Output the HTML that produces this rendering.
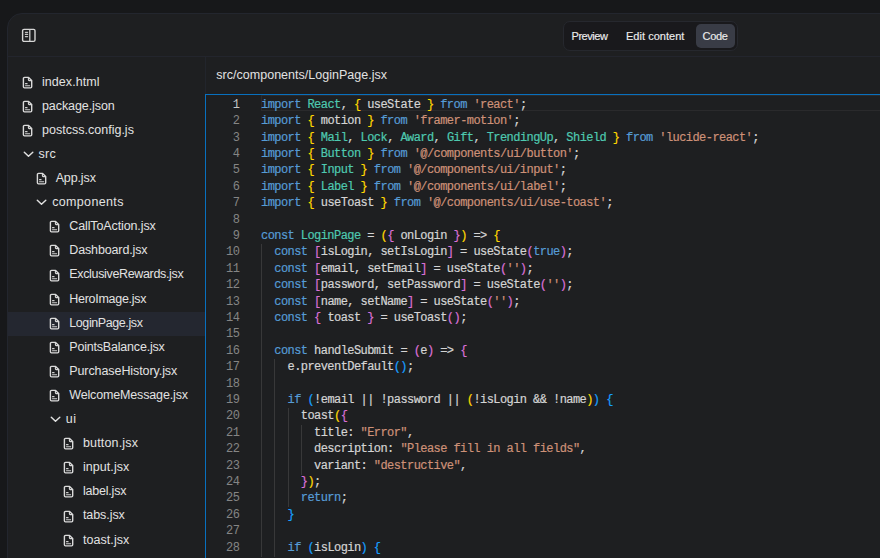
<!DOCTYPE html>
<html><head><meta charset="utf-8"><style>
html,body{margin:0;padding:0;}
body{width:880px;height:558px;overflow:hidden;background:#17181a;position:relative;font-family:"Liberation Sans",sans-serif;}
.panel{position:absolute;left:7px;top:13px;width:900px;height:600px;background:#1e1f21;border:1px solid #23262e;border-radius:15px 0 0 0;box-sizing:border-box;}
.hdr{position:absolute;left:7px;top:56px;width:880px;height:1px;background:#23252d;}
.side{position:absolute;left:205px;top:57px;width:1px;height:520px;background:#22252c;}
.tabs{position:absolute;left:563px;top:21px;width:175px;height:30px;box-sizing:border-box;border:1px solid #26282e;border-radius:7px;background:#19191c;}
.tab{position:absolute;top:24px;height:24px;line-height:24px;font-size:11px;color:#ececec;-webkit-text-stroke:0.15px #ececec;}
.tab.act{background:#393c46;border-radius:5px;}
.ic{position:absolute;line-height:0;}
.tn{position:absolute;font-size:12.5px;line-height:16px;color:#e2e2e2;white-space:pre;letter-spacing:-0.1px;}
.sel{position:absolute;left:8px;top:0;width:197px;height:24px;background:#242730;}
.fh{position:absolute;left:216.3px;top:67.4px;font-size:12.5px;line-height:16px;color:#e2e2e2;letter-spacing:0.02px;}
.ed{position:absolute;left:205px;top:94px;width:700px;height:500px;border:1px solid #0870bf;box-sizing:border-box;background:#1e1f21;}
.cur{position:absolute;left:261px;top:95px;width:640px;height:16px;box-sizing:border-box;border:1px solid #2a2a2c;border-right:none;}
.ln{position:absolute;left:261.0px;font-family:"Liberation Mono",monospace;font-size:12px;letter-spacing:-0.565px;line-height:16.4px;height:16.4px;white-space:pre;color:#d4d4d4;-webkit-text-stroke:0.2px;}
.num{position:absolute;left:205px;width:34.3px;text-align:right;font-family:"Liberation Mono",monospace;font-size:12px;letter-spacing:-0.565px;-webkit-text-stroke:0px;line-height:16.4px;white-space:pre;}
.guide{position:absolute;width:1px;height:17px;background:#383839;}
</style></head><body>
<div class="panel"></div>
<div class="hdr"></div>
<div class="ic" style="left:21px;top:28px"><svg width="16" height="16" viewBox="0 0 16 16"><rect x="1.6" y="1.4" width="12.4" height="12.0" rx="1.4" fill="none" stroke="#d6d6d6" stroke-width="1.4"/><path d="M8.8 1.6v11.6" stroke="#cfcfcf" stroke-width="1.3"/><path d="M4.4 4.3h2.2M4.4 6.4h2.2M4.4 8.6h2.2" stroke="#c4c4c4" stroke-width="1.2" stroke-linecap="round"/></svg></div>
<div class="tabs"></div>
<div class="tab act" style="left:696px;width:39px;"></div>
<div class="tab" style="left:571.5px;letter-spacing:-0.45px">Preview</div>
<div class="tab" style="left:626px;letter-spacing:0.03px">Edit content</div>
<div class="tab" style="left:702.6px;letter-spacing:-0.35px">Code</div>
<div class="side"></div>
<div class="ic" style="left:22.20px;top:75.75px"><svg width="12" height="14" viewBox="0 0 12 14"><path d="M6.6 1.4H2.5a1.1 1.1 0 0 0-1.1 1.1v8.3a1.1 1.1 0 0 0 1.1 1.1h6.1a1.1 1.1 0 0 0 1.1-1.1V4.5z" fill="none" stroke="#dadada" stroke-width="1.4" stroke-linejoin="round"/><path d="M6.4 1.6v2.2a0.8 0.8 0 0 0 0.8 0.8h2.3" fill="none" stroke="#dadada" stroke-width="1.1"/><path d="M3.1 7.6h2.4M3.1 9.7h5" stroke="#d0d0d0" stroke-width="1.1"/></svg></div><div class="tn" style="left:42.00px;top:73.67px;letter-spacing:0.056px">index.html</div><div class="ic" style="left:22.20px;top:99.85px"><svg width="12" height="14" viewBox="0 0 12 14"><path d="M6.6 1.4H2.5a1.1 1.1 0 0 0-1.1 1.1v8.3a1.1 1.1 0 0 0 1.1 1.1h6.1a1.1 1.1 0 0 0 1.1-1.1V4.5z" fill="none" stroke="#dadada" stroke-width="1.4" stroke-linejoin="round"/><path d="M6.4 1.6v2.2a0.8 0.8 0 0 0 0.8 0.8h2.3" fill="none" stroke="#dadada" stroke-width="1.1"/><path d="M3.1 7.6h2.4M3.1 9.7h5" stroke="#d0d0d0" stroke-width="1.1"/></svg></div><div class="tn" style="left:42.00px;top:97.77px;letter-spacing:-0.082px">package.json</div><div class="ic" style="left:22.20px;top:123.95px"><svg width="12" height="14" viewBox="0 0 12 14"><path d="M6.6 1.4H2.5a1.1 1.1 0 0 0-1.1 1.1v8.3a1.1 1.1 0 0 0 1.1 1.1h6.1a1.1 1.1 0 0 0 1.1-1.1V4.5z" fill="none" stroke="#dadada" stroke-width="1.4" stroke-linejoin="round"/><path d="M6.4 1.6v2.2a0.8 0.8 0 0 0 0.8 0.8h2.3" fill="none" stroke="#dadada" stroke-width="1.1"/><path d="M3.1 7.6h2.4M3.1 9.7h5" stroke="#d0d0d0" stroke-width="1.1"/></svg></div><div class="tn" style="left:42.00px;top:121.87px;letter-spacing:0.013px">postcss.config.js</div><div class="ic" style="left:22.50px;top:151.00px"><svg width="11" height="7" viewBox="0 0 11 7"><path d="M1.3 1.3L5.5 5.3L9.8 1.3" fill="none" stroke="#e0e0e0" stroke-width="1.45" stroke-linecap="round" stroke-linejoin="round"/></svg></div><div class="tn" style="left:38.50px;top:145.97px;letter-spacing:0.250px">src</div><div class="ic" style="left:35.83px;top:172.15px"><svg width="12" height="14" viewBox="0 0 12 14"><path d="M6.6 1.4H2.5a1.1 1.1 0 0 0-1.1 1.1v8.3a1.1 1.1 0 0 0 1.1 1.1h6.1a1.1 1.1 0 0 0 1.1-1.1V4.5z" fill="none" stroke="#dadada" stroke-width="1.4" stroke-linejoin="round"/><path d="M6.4 1.6v2.2a0.8 0.8 0 0 0 0.8 0.8h2.3" fill="none" stroke="#dadada" stroke-width="1.1"/><path d="M3.1 7.6h2.4M3.1 9.7h5" stroke="#d0d0d0" stroke-width="1.1"/></svg></div><div class="tn" style="left:55.63px;top:170.07px;letter-spacing:-0.117px">App.jsx</div><div class="ic" style="left:36.13px;top:199.20px"><svg width="11" height="7" viewBox="0 0 11 7"><path d="M1.3 1.3L5.5 5.3L9.8 1.3" fill="none" stroke="#e0e0e0" stroke-width="1.45" stroke-linecap="round" stroke-linejoin="round"/></svg></div><div class="tn" style="left:52.13px;top:194.17px;letter-spacing:0.356px">components</div><div class="ic" style="left:49.46px;top:220.35px"><svg width="12" height="14" viewBox="0 0 12 14"><path d="M6.6 1.4H2.5a1.1 1.1 0 0 0-1.1 1.1v8.3a1.1 1.1 0 0 0 1.1 1.1h6.1a1.1 1.1 0 0 0 1.1-1.1V4.5z" fill="none" stroke="#dadada" stroke-width="1.4" stroke-linejoin="round"/><path d="M6.4 1.6v2.2a0.8 0.8 0 0 0 0.8 0.8h2.3" fill="none" stroke="#dadada" stroke-width="1.1"/><path d="M3.1 7.6h2.4M3.1 9.7h5" stroke="#d0d0d0" stroke-width="1.1"/></svg></div><div class="tn" style="left:69.26px;top:218.27px;letter-spacing:-0.113px">CallToAction.jsx</div><div class="ic" style="left:49.46px;top:244.45px"><svg width="12" height="14" viewBox="0 0 12 14"><path d="M6.6 1.4H2.5a1.1 1.1 0 0 0-1.1 1.1v8.3a1.1 1.1 0 0 0 1.1 1.1h6.1a1.1 1.1 0 0 0 1.1-1.1V4.5z" fill="none" stroke="#dadada" stroke-width="1.4" stroke-linejoin="round"/><path d="M6.4 1.6v2.2a0.8 0.8 0 0 0 0.8 0.8h2.3" fill="none" stroke="#dadada" stroke-width="1.1"/><path d="M3.1 7.6h2.4M3.1 9.7h5" stroke="#d0d0d0" stroke-width="1.1"/></svg></div><div class="tn" style="left:69.26px;top:242.37px;letter-spacing:-0.133px">Dashboard.jsx</div><div class="ic" style="left:49.46px;top:268.55px"><svg width="12" height="14" viewBox="0 0 12 14"><path d="M6.6 1.4H2.5a1.1 1.1 0 0 0-1.1 1.1v8.3a1.1 1.1 0 0 0 1.1 1.1h6.1a1.1 1.1 0 0 0 1.1-1.1V4.5z" fill="none" stroke="#dadada" stroke-width="1.4" stroke-linejoin="round"/><path d="M6.4 1.6v2.2a0.8 0.8 0 0 0 0.8 0.8h2.3" fill="none" stroke="#dadada" stroke-width="1.1"/><path d="M3.1 7.6h2.4M3.1 9.7h5" stroke="#d0d0d0" stroke-width="1.1"/></svg></div><div class="tn" style="left:69.26px;top:266.47px;letter-spacing:-0.337px">ExclusiveRewards.jsx</div><div class="ic" style="left:49.46px;top:292.65px"><svg width="12" height="14" viewBox="0 0 12 14"><path d="M6.6 1.4H2.5a1.1 1.1 0 0 0-1.1 1.1v8.3a1.1 1.1 0 0 0 1.1 1.1h6.1a1.1 1.1 0 0 0 1.1-1.1V4.5z" fill="none" stroke="#dadada" stroke-width="1.4" stroke-linejoin="round"/><path d="M6.4 1.6v2.2a0.8 0.8 0 0 0 0.8 0.8h2.3" fill="none" stroke="#dadada" stroke-width="1.1"/><path d="M3.1 7.6h2.4M3.1 9.7h5" stroke="#d0d0d0" stroke-width="1.1"/></svg></div><div class="tn" style="left:69.26px;top:290.57px;letter-spacing:-0.275px">HeroImage.jsx</div><div class="sel" style="top:312px"></div><div class="ic" style="left:49.46px;top:316.75px"><svg width="12" height="14" viewBox="0 0 12 14"><path d="M6.6 1.4H2.5a1.1 1.1 0 0 0-1.1 1.1v8.3a1.1 1.1 0 0 0 1.1 1.1h6.1a1.1 1.1 0 0 0 1.1-1.1V4.5z" fill="none" stroke="#dadada" stroke-width="1.4" stroke-linejoin="round"/><path d="M6.4 1.6v2.2a0.8 0.8 0 0 0 0.8 0.8h2.3" fill="none" stroke="#dadada" stroke-width="1.1"/><path d="M3.1 7.6h2.4M3.1 9.7h5" stroke="#d0d0d0" stroke-width="1.1"/></svg></div><div class="tn" style="left:69.26px;top:314.67px;letter-spacing:-0.408px">LoginPage.jsx</div><div class="ic" style="left:49.46px;top:340.85px"><svg width="12" height="14" viewBox="0 0 12 14"><path d="M6.6 1.4H2.5a1.1 1.1 0 0 0-1.1 1.1v8.3a1.1 1.1 0 0 0 1.1 1.1h6.1a1.1 1.1 0 0 0 1.1-1.1V4.5z" fill="none" stroke="#dadada" stroke-width="1.4" stroke-linejoin="round"/><path d="M6.4 1.6v2.2a0.8 0.8 0 0 0 0.8 0.8h2.3" fill="none" stroke="#dadada" stroke-width="1.1"/><path d="M3.1 7.6h2.4M3.1 9.7h5" stroke="#d0d0d0" stroke-width="1.1"/></svg></div><div class="tn" style="left:69.26px;top:338.77px;letter-spacing:-0.194px">PointsBalance.jsx</div><div class="ic" style="left:49.46px;top:364.95px"><svg width="12" height="14" viewBox="0 0 12 14"><path d="M6.6 1.4H2.5a1.1 1.1 0 0 0-1.1 1.1v8.3a1.1 1.1 0 0 0 1.1 1.1h6.1a1.1 1.1 0 0 0 1.1-1.1V4.5z" fill="none" stroke="#dadada" stroke-width="1.4" stroke-linejoin="round"/><path d="M6.4 1.6v2.2a0.8 0.8 0 0 0 0.8 0.8h2.3" fill="none" stroke="#dadada" stroke-width="1.1"/><path d="M3.1 7.6h2.4M3.1 9.7h5" stroke="#d0d0d0" stroke-width="1.1"/></svg></div><div class="tn" style="left:69.26px;top:362.87px;letter-spacing:-0.083px">PurchaseHistory.jsx</div><div class="ic" style="left:49.46px;top:389.05px"><svg width="12" height="14" viewBox="0 0 12 14"><path d="M6.6 1.4H2.5a1.1 1.1 0 0 0-1.1 1.1v8.3a1.1 1.1 0 0 0 1.1 1.1h6.1a1.1 1.1 0 0 0 1.1-1.1V4.5z" fill="none" stroke="#dadada" stroke-width="1.4" stroke-linejoin="round"/><path d="M6.4 1.6v2.2a0.8 0.8 0 0 0 0.8 0.8h2.3" fill="none" stroke="#dadada" stroke-width="1.1"/><path d="M3.1 7.6h2.4M3.1 9.7h5" stroke="#d0d0d0" stroke-width="1.1"/></svg></div><div class="tn" style="left:69.26px;top:386.97px;letter-spacing:-0.153px">WelcomeMessage.jsx</div><div class="ic" style="left:49.76px;top:416.10px"><svg width="11" height="7" viewBox="0 0 11 7"><path d="M1.3 1.3L5.5 5.3L9.8 1.3" fill="none" stroke="#e0e0e0" stroke-width="1.45" stroke-linecap="round" stroke-linejoin="round"/></svg></div><div class="tn" style="left:65.76px;top:411.07px;letter-spacing:0.500px">ui</div><div class="ic" style="left:63.09px;top:437.25px"><svg width="12" height="14" viewBox="0 0 12 14"><path d="M6.6 1.4H2.5a1.1 1.1 0 0 0-1.1 1.1v8.3a1.1 1.1 0 0 0 1.1 1.1h6.1a1.1 1.1 0 0 0 1.1-1.1V4.5z" fill="none" stroke="#dadada" stroke-width="1.4" stroke-linejoin="round"/><path d="M6.4 1.6v2.2a0.8 0.8 0 0 0 0.8 0.8h2.3" fill="none" stroke="#dadada" stroke-width="1.1"/><path d="M3.1 7.6h2.4M3.1 9.7h5" stroke="#d0d0d0" stroke-width="1.1"/></svg></div><div class="tn" style="left:82.89px;top:435.17px;letter-spacing:0.178px">button.jsx</div><div class="ic" style="left:63.09px;top:461.35px"><svg width="12" height="14" viewBox="0 0 12 14"><path d="M6.6 1.4H2.5a1.1 1.1 0 0 0-1.1 1.1v8.3a1.1 1.1 0 0 0 1.1 1.1h6.1a1.1 1.1 0 0 0 1.1-1.1V4.5z" fill="none" stroke="#dadada" stroke-width="1.4" stroke-linejoin="round"/><path d="M6.4 1.6v2.2a0.8 0.8 0 0 0 0.8 0.8h2.3" fill="none" stroke="#dadada" stroke-width="1.1"/><path d="M3.1 7.6h2.4M3.1 9.7h5" stroke="#d0d0d0" stroke-width="1.1"/></svg></div><div class="tn" style="left:82.89px;top:459.27px;letter-spacing:0.075px">input.jsx</div><div class="ic" style="left:63.09px;top:485.45px"><svg width="12" height="14" viewBox="0 0 12 14"><path d="M6.6 1.4H2.5a1.1 1.1 0 0 0-1.1 1.1v8.3a1.1 1.1 0 0 0 1.1 1.1h6.1a1.1 1.1 0 0 0 1.1-1.1V4.5z" fill="none" stroke="#dadada" stroke-width="1.4" stroke-linejoin="round"/><path d="M6.4 1.6v2.2a0.8 0.8 0 0 0 0.8 0.8h2.3" fill="none" stroke="#dadada" stroke-width="1.1"/><path d="M3.1 7.6h2.4M3.1 9.7h5" stroke="#d0d0d0" stroke-width="1.1"/></svg></div><div class="tn" style="left:82.89px;top:483.37px;letter-spacing:-0.200px">label.jsx</div><div class="ic" style="left:63.09px;top:509.55px"><svg width="12" height="14" viewBox="0 0 12 14"><path d="M6.6 1.4H2.5a1.1 1.1 0 0 0-1.1 1.1v8.3a1.1 1.1 0 0 0 1.1 1.1h6.1a1.1 1.1 0 0 0 1.1-1.1V4.5z" fill="none" stroke="#dadada" stroke-width="1.4" stroke-linejoin="round"/><path d="M6.4 1.6v2.2a0.8 0.8 0 0 0 0.8 0.8h2.3" fill="none" stroke="#dadada" stroke-width="1.1"/><path d="M3.1 7.6h2.4M3.1 9.7h5" stroke="#d0d0d0" stroke-width="1.1"/></svg></div><div class="tn" style="left:82.89px;top:507.47px;letter-spacing:-0.057px">tabs.jsx</div><div class="ic" style="left:63.09px;top:533.65px"><svg width="12" height="14" viewBox="0 0 12 14"><path d="M6.6 1.4H2.5a1.1 1.1 0 0 0-1.1 1.1v8.3a1.1 1.1 0 0 0 1.1 1.1h6.1a1.1 1.1 0 0 0 1.1-1.1V4.5z" fill="none" stroke="#dadada" stroke-width="1.4" stroke-linejoin="round"/><path d="M6.4 1.6v2.2a0.8 0.8 0 0 0 0.8 0.8h2.3" fill="none" stroke="#dadada" stroke-width="1.1"/><path d="M3.1 7.6h2.4M3.1 9.7h5" stroke="#d0d0d0" stroke-width="1.1"/></svg></div><div class="tn" style="left:82.89px;top:531.57px;letter-spacing:0.075px">toast.jsx</div>
<div class="fh">src/components/LoginPage.jsx</div>
<div class="ed"></div>
<div class="cur"></div>
<div class="ln" style="top:96.70px"><span style="color:#569cd6">import</span> <span style="color:#4ec9b0">React</span>, <span style="color:#ffd700">{</span> useState <span style="color:#ffd700">}</span> <span style="color:#569cd6">from</span> <span style="color:#ce9178">&#x27;react&#x27;</span>;</div><div class="num" style="top:96.70px;color:#c6c6c6">1</div><div class="ln" style="top:113.10px"><span style="color:#569cd6">import</span> <span style="color:#ffd700">{</span> motion <span style="color:#ffd700">}</span> <span style="color:#569cd6">from</span> <span style="color:#ce9178">&#x27;framer-motion&#x27;</span>;</div><div class="num" style="top:113.10px;color:#858585">2</div><div class="ln" style="top:129.50px"><span style="color:#569cd6">import</span> <span style="color:#ffd700">{</span> <span style="color:#4ec9b0">Mail</span>, <span style="color:#4ec9b0">Lock</span>, <span style="color:#4ec9b0">Award</span>, <span style="color:#4ec9b0">Gift</span>, <span style="color:#4ec9b0">TrendingUp</span>, <span style="color:#4ec9b0">Shield</span> <span style="color:#ffd700">}</span> <span style="color:#569cd6">from</span> <span style="color:#ce9178">&#x27;lucide-react&#x27;</span>;</div><div class="num" style="top:129.50px;color:#858585">3</div><div class="ln" style="top:145.90px"><span style="color:#569cd6">import</span> <span style="color:#ffd700">{</span> <span style="color:#4ec9b0">Button</span> <span style="color:#ffd700">}</span> <span style="color:#569cd6">from</span> <span style="color:#ce9178">&#x27;@/components/ui/button&#x27;</span>;</div><div class="num" style="top:145.90px;color:#858585">4</div><div class="ln" style="top:162.30px"><span style="color:#569cd6">import</span> <span style="color:#ffd700">{</span> <span style="color:#4ec9b0">Input</span> <span style="color:#ffd700">}</span> <span style="color:#569cd6">from</span> <span style="color:#ce9178">&#x27;@/components/ui/input&#x27;</span>;</div><div class="num" style="top:162.30px;color:#858585">5</div><div class="ln" style="top:178.70px"><span style="color:#569cd6">import</span> <span style="color:#ffd700">{</span> <span style="color:#4ec9b0">Label</span> <span style="color:#ffd700">}</span> <span style="color:#569cd6">from</span> <span style="color:#ce9178">&#x27;@/components/ui/label&#x27;</span>;</div><div class="num" style="top:178.70px;color:#858585">6</div><div class="ln" style="top:195.10px"><span style="color:#569cd6">import</span> <span style="color:#ffd700">{</span> useToast <span style="color:#ffd700">}</span> <span style="color:#569cd6">from</span> <span style="color:#ce9178">&#x27;@/components/ui/use-toast&#x27;</span>;</div><div class="num" style="top:195.10px;color:#858585">7</div><div class="ln" style="top:211.50px"></div><div class="num" style="top:211.50px;color:#858585">8</div><div class="ln" style="top:227.90px"><span style="color:#569cd6">const</span> <span style="color:#4ec9b0">LoginPage</span> = <span style="color:#ffd700">(</span><span style="color:#da70d6">{</span> onLogin <span style="color:#da70d6">}</span><span style="color:#ffd700">)</span> =&gt; <span style="color:#ffd700">{</span></div><div class="num" style="top:227.90px;color:#858585">9</div><div class="ln" style="top:244.30px">  <span style="color:#569cd6">const</span> <span style="color:#da70d6">[</span>isLogin, setIsLogin<span style="color:#da70d6">]</span> = useState<span style="color:#da70d6">(</span><span style="color:#569cd6">true</span><span style="color:#da70d6">)</span>;</div><div class="num" style="top:244.30px;color:#858585">10</div><div class="guide" style="top:244.30px;left:261.00px"></div><div class="ln" style="top:260.70px">  <span style="color:#569cd6">const</span> <span style="color:#da70d6">[</span>email, setEmail<span style="color:#da70d6">]</span> = useState<span style="color:#da70d6">(</span><span style="color:#ce9178">&#x27;&#x27;</span><span style="color:#da70d6">)</span>;</div><div class="num" style="top:260.70px;color:#858585">11</div><div class="guide" style="top:260.70px;left:261.00px"></div><div class="ln" style="top:277.10px">  <span style="color:#569cd6">const</span> <span style="color:#da70d6">[</span>password, setPassword<span style="color:#da70d6">]</span> = useState<span style="color:#da70d6">(</span><span style="color:#ce9178">&#x27;&#x27;</span><span style="color:#da70d6">)</span>;</div><div class="num" style="top:277.10px;color:#858585">12</div><div class="guide" style="top:277.10px;left:261.00px"></div><div class="ln" style="top:293.50px">  <span style="color:#569cd6">const</span> <span style="color:#da70d6">[</span>name, setName<span style="color:#da70d6">]</span> = useState<span style="color:#da70d6">(</span><span style="color:#ce9178">&#x27;&#x27;</span><span style="color:#da70d6">)</span>;</div><div class="num" style="top:293.50px;color:#858585">13</div><div class="guide" style="top:293.50px;left:261.00px"></div><div class="ln" style="top:309.90px">  <span style="color:#569cd6">const</span> <span style="color:#da70d6">{</span> toast <span style="color:#da70d6">}</span> = useToast<span style="color:#da70d6">()</span>;</div><div class="num" style="top:309.90px;color:#858585">14</div><div class="guide" style="top:309.90px;left:261.00px"></div><div class="ln" style="top:326.30px"></div><div class="num" style="top:326.30px;color:#858585">15</div><div class="guide" style="top:326.30px;left:261.00px"></div><div class="ln" style="top:342.70px">  <span style="color:#569cd6">const</span> handleSubmit = <span style="color:#da70d6">(</span>e<span style="color:#da70d6">)</span> =&gt; <span style="color:#da70d6">{</span></div><div class="num" style="top:342.70px;color:#858585">16</div><div class="guide" style="top:342.70px;left:261.00px"></div><div class="ln" style="top:359.10px">    e.preventDefault<span style="color:#179fff">()</span>;</div><div class="num" style="top:359.10px;color:#858585">17</div><div class="guide" style="top:359.10px;left:261.00px"></div><div class="guide" style="top:359.10px;left:274.27px"></div><div class="ln" style="top:375.50px"></div><div class="num" style="top:375.50px;color:#858585">18</div><div class="guide" style="top:375.50px;left:261.00px"></div><div class="guide" style="top:375.50px;left:274.27px"></div><div class="ln" style="top:391.90px">    <span style="color:#569cd6">if</span> <span style="color:#179fff">(</span>!email || !password || <span style="color:#ffd700">(</span>!isLogin &amp;&amp; !name<span style="color:#ffd700">)</span><span style="color:#179fff">)</span> <span style="color:#179fff">{</span></div><div class="num" style="top:391.90px;color:#858585">19</div><div class="guide" style="top:391.90px;left:261.00px"></div><div class="guide" style="top:391.90px;left:274.27px"></div><div class="ln" style="top:408.30px">      toast<span style="color:#ffd700">(</span><span style="color:#da70d6">{</span></div><div class="num" style="top:408.30px;color:#858585">20</div><div class="guide" style="top:408.30px;left:261.00px"></div><div class="guide" style="top:408.30px;left:274.27px"></div><div class="guide" style="top:408.30px;left:287.54px"></div><div class="ln" style="top:424.70px">        title: <span style="color:#ce9178">&quot;Error&quot;</span>,</div><div class="num" style="top:424.70px;color:#858585">21</div><div class="guide" style="top:424.70px;left:261.00px"></div><div class="guide" style="top:424.70px;left:274.27px"></div><div class="guide" style="top:424.70px;left:287.54px"></div><div class="guide" style="top:424.70px;left:300.81px"></div><div class="ln" style="top:441.10px">        description: <span style="color:#ce9178">&quot;Please fill in all fields&quot;</span>,</div><div class="num" style="top:441.10px;color:#858585">22</div><div class="guide" style="top:441.10px;left:261.00px"></div><div class="guide" style="top:441.10px;left:274.27px"></div><div class="guide" style="top:441.10px;left:287.54px"></div><div class="guide" style="top:441.10px;left:300.81px"></div><div class="ln" style="top:457.50px">        variant: <span style="color:#ce9178">&quot;destructive&quot;</span>,</div><div class="num" style="top:457.50px;color:#858585">23</div><div class="guide" style="top:457.50px;left:261.00px"></div><div class="guide" style="top:457.50px;left:274.27px"></div><div class="guide" style="top:457.50px;left:287.54px"></div><div class="guide" style="top:457.50px;left:300.81px"></div><div class="ln" style="top:473.90px">      <span style="color:#da70d6">}</span><span style="color:#ffd700">)</span>;</div><div class="num" style="top:473.90px;color:#858585">24</div><div class="guide" style="top:473.90px;left:261.00px"></div><div class="guide" style="top:473.90px;left:274.27px"></div><div class="guide" style="top:473.90px;left:287.54px"></div><div class="ln" style="top:490.30px">      <span style="color:#569cd6">return</span>;</div><div class="num" style="top:490.30px;color:#858585">25</div><div class="guide" style="top:490.30px;left:261.00px"></div><div class="guide" style="top:490.30px;left:274.27px"></div><div class="guide" style="top:490.30px;left:287.54px"></div><div class="ln" style="top:506.70px">    <span style="color:#179fff">}</span></div><div class="num" style="top:506.70px;color:#858585">26</div><div class="guide" style="top:506.70px;left:261.00px"></div><div class="guide" style="top:506.70px;left:274.27px"></div><div class="ln" style="top:523.10px"></div><div class="num" style="top:523.10px;color:#858585">27</div><div class="guide" style="top:523.10px;left:261.00px"></div><div class="guide" style="top:523.10px;left:274.27px"></div><div class="ln" style="top:539.50px">    <span style="color:#569cd6">if</span> <span style="color:#179fff">(</span>isLogin<span style="color:#179fff">)</span> <span style="color:#179fff">{</span></div><div class="num" style="top:539.50px;color:#858585">28</div><div class="guide" style="top:539.50px;left:261.00px"></div><div class="guide" style="top:539.50px;left:274.27px"></div>
</body></html>
